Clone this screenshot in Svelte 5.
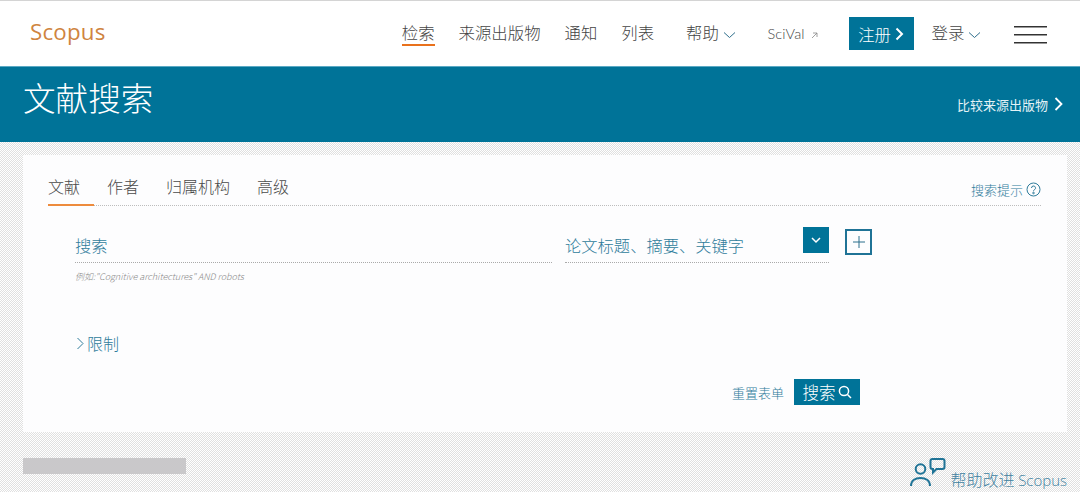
<script>
  const nav = ['来源出版物', '通知', '列表'];
  const tabs = ['文献', '作者', '归属机构', '高级'];
</script>

<header class="topbar">
  <div class="logo">Scopus</div>
  <nav class="nav">
    <a class="nav-link active" href="#a">检索</a>
    {#each nav as item}
      <a class="nav-link" href="#a">{item}</a>
    {/each}
    <a class="nav-link help" href="#a">帮助
      <svg width="13" height="8" viewBox="0 0 13 8"><path d="M1 1.500l5.500 5 5.500-5" /></svg>
    </a>
    <a class="scival" href="#a">SciVal
      <svg width="7" height="7" viewBox="0 0 7 7"><path d="M1 6l5-5M2 1h4v4" /></svg>
    </a>
    <a class="register" href="#a">注册
      <svg width="9" height="14" viewBox="0 0 9 14"><path d="M1.500 1.500l5.500 5.500-5.500 5.500" /></svg>
    </a>
    <a class="nav-link login" href="#a">登录
      <svg width="13" height="8" viewBox="0 0 13 8"><path d="M1 1.500l5.500 5 5.500-5" /></svg>
    </a>
    <div class="burger"><span></span><span></span><span></span></div>
  </nav>
</header>

<section class="band">
  <h1>文献搜索</h1>
  <a class="compare" href="#a">比较来源出版物
    <svg width="9" height="14" viewBox="0 0 9 14"><path d="M1.500 1l6 6-6 6" /></svg>
  </a>
</section>

<main class="page">
  <div class="card">
    <div class="tabs">
      {#each tabs as tab, i}
        <a class="tab" class:current={i === 0} href="#a">{tab}</a>
      {/each}
      <a class="tips" href="#a">搜索提示
        <svg width="15" height="15" viewBox="0 0 15 15">
          <circle cx="7.500" cy="7.500" r="6.500" />
          <path d="M5.500 6a2 2 0 1 1 3 1.700c-.7.400-1 .8-1 1.500" />
          <circle class="dot" cx="7.500" cy="11" r=".8" />
        </svg>
      </a>
    </div>

    <div class="form">
      <div class="query">
        <div class="field-text">搜索</div>
        <div class="example">例如:"Cognitive architectures" AND robots</div>
      </div>
      <div class="scope">
        <div class="field-text">论文标题、摘要、关键字</div>
        <span class="select-btn">
          <svg width="10" height="7" viewBox="0 0 10 7"><path d="M1 1l4 4 4-4" /></svg>
        </span>
      </div>
      <span class="add-btn">
        <svg width="12" height="12" viewBox="0 0 12 12"><path d="M6 0v12M0 6h12" /></svg>
      </span>
    </div>

    <a class="limit" href="#a">
      <svg width="9" height="13" viewBox="0 0 9 13"><path d="M1.500 1l5.500 5.500-5.500 5.500" /></svg>
      限制
    </a>

    <div class="actions">
      <a class="reset" href="#a">重置表单</a>
      <button class="search">搜索
        <svg width="14" height="14" viewBox="0 0 14 14"><circle cx="6" cy="6" r="4.600" /><path d="M9.500 9.500l3.500 3.500" /></svg>
      </button>
    </div>
  </div>

  <div class="bottom">
    <div class="redacted"></div>
    <a class="feedback" href="#a">
      <svg width="36" height="30" viewBox="0 0 36 30">
        <circle cx="10.500" cy="11" r="4.800" />
        <path d="M1 28c0-5 4-8 9.500-8s9.500 3 9.500 8" />
        <path d="M22.500 1h10a2 2 0 0 1 2 2v6a2 2 0 0 1-2 2h-6l-3.500 3.500V11h-.5a2 2 0 0 1-2-2V3a2 2 0 0 1 2-2z" />
      </svg>
      <span>帮助改进 <i>Scopus</i></span>
    </a>
  </div>
</main>

<style>
  :global(body) {
    margin: 0;
    font-family: "Noto Sans CJK SC", "Noto Sans", sans-serif;
    font-weight: 300;
    background: #fff;
    overflow: hidden;
  }
  a {
    text-decoration: none;
    color: inherit;
  }
  svg {
    fill: none;
    stroke: currentColor;
  }
  .topbar {
    box-sizing: border-box;
    height: 66px;
    border-top: 1px solid #d4d4d4;
    display: flex;
    align-items: center;
    justify-content: space-between;
    padding: 0 33px 0 30px;
    color: #444;
    background: #fff;
  }
  .logo {
    font-family: "Open Sans", sans-serif;
    font-size: 22.300px;
    font-weight: 400;
    color: #cf8440;
    letter-spacing: .2px;
    margin-top: -4px;
  }
  .nav {
    display: flex;
    align-items: center;
    font-size: 16.400px;
  }
  .nav-link {
    margin-right: 24px;
    line-height: 22px;
    padding-bottom: 1px;
    border-bottom: 2px solid transparent;
  }
  .nav-link.active {
    border-bottom-color: #e9711c;
  }
  .help {
    margin-left: 8px;
    margin-right: 0;
  }
  .help svg, .login svg {
    stroke: #2f6f8c;
  }
  .scival {
    font-family: "Lato", sans-serif;
    font-size: 14.500px;
    margin-left: 32px;
    letter-spacing: .1px;
  }
  .scival svg {
    stroke: #888;
    stroke-width: .8;
    margin-left: 2px;
  }
  .register {
    box-sizing: border-box;
    width: 65px;
    height: 33px;
    margin-left: 31px;
    margin-right: 18px;
    background: #007398;
    color: #fff;
    display: flex;
    align-items: center;
    justify-content: center;
    gap: 4px;
  }
  .register svg {
    stroke-width: 2;
  }
  .login {
    margin-right: 33px;
  }
  .burger {
    width: 33px;
    display: flex;
    flex-direction: column;
    gap: 6px;
    margin-top: 2px;
  }
  .burger span {
    height: 1px;
    background: #333;
    border-bottom: 1px solid #999;
  }
  .band {
    box-sizing: border-box;
    height: 76px;
    background: #007398;
    border-top: 1px solid #5ba9c4;
    color: #fff;
    display: flex;
    justify-content: space-between;
    padding: 0 17px 0 23px;
  }
  .band h1 {
    margin: 7px 0 0;
    font-size: 32.600px;
    line-height: 46px;
    font-weight: 300;
  }
  .compare {
    display: flex;
    align-items: center;
    gap: 6px;
    height: 24px;
    margin-top: 25px;
    font-size: 13px;
    font-weight: 400;
    color: #e4f2f6;
  }
  .compare svg {
    stroke: #fff;
    stroke-width: 1.800;
  }
  .page {
    height: 350px;
    box-sizing: border-box;
    padding: 13px 13px 0 23px;
    background-color: #fff;
    background-image: repeating-conic-gradient(#e0e0e0 0 25%, #fff 0 50%);
    background-size: 2px 2px;
  }
  .card {
    box-sizing: border-box;
    height: 277px;
    background: #fdfdfe;
    padding: 18px 26px 0 25px;
    display: flex;
    flex-direction: column;
  }
  .tabs {
    display: flex;
    align-items: flex-start;
    height: 32px;
    border-bottom: 1px dotted #bdbdbd;
    color: #4a4a4a;
    font-size: 16px;
  }
  .tab {
    line-height: 27px;
    height: 32px;
    margin-right: 27px;
  }
  .tab.current {
    box-sizing: border-box;
    width: 46px;
    margin-right: 13px;
    height: 33px;
    border-bottom: 2px solid #ed8b3d;
  }
  .tips {
    margin-left: auto;
    margin-top: 7px;
    display: flex;
    align-items: center;
    gap: 3px;
    font-size: 13px;
    color: #2f7c9b;
  }
  .form {
    display: flex;
    align-items: flex-start;
    margin-top: 24px;
    padding-left: 27px;
  }
  .field-text {
    height: 33px;
    box-sizing: border-box;
    line-height: 30px;
    font-size: 16.300px;
    color: #2f7c9b;
    border-bottom: 1px dotted #aaa;
  }
  .query {
    width: 477px;
    margin-right: 13px;
  }
  .example {
    font-size: 9px;
    font-style: italic;
    color: #888;
    margin-top: 7px;
    line-height: 14px;
  }
  .scope {
    width: 264px;
    position: relative;
    margin-right: 16px;
  }
  .select-btn {
    position: absolute;
    top: -3px;
    right: 0;
    width: 26px;
    height: 26px;
    background: #007398;
    color: #fff;
    display: flex;
    align-items: center;
    justify-content: center;
  }
  .select-btn svg {
    stroke-width: 1.500;
  }
  .add-btn {
    box-sizing: border-box;
    width: 27px;
    height: 26px;
    margin-top: -1px;
    border: 2px solid #1f7396;
    color: #2a6f8c;
    display: flex;
    align-items: center;
    justify-content: center;
  }
  .limit {
    display: flex;
    align-items: center;
    gap: 2px;
    margin: 47px 0 0 28px;
    font-size: 16px;
    line-height: 24px;
    color: #2f7c9b;
  }
  .actions {
    display: flex;
    justify-content: flex-end;
    align-items: center;
    gap: 10px;
    margin-top: 24px;
    padding-right: 181px;
  }
  .reset {
    font-size: 13px;
    color: #2f7c9b;
  }
  .search {
    box-sizing: border-box;
    width: 66px;
    height: 26px;
    border: 0;
    padding: 0;
    background: #007398;
    color: #fff;
    font: inherit;
    font-size: 16.500px;
    display: flex;
    align-items: center;
    justify-content: center;
    gap: 2px;
  }
  .search svg {
    stroke-width: 1.500;
  }
  .bottom {
    display: flex;
    justify-content: space-between;
  }
  .redacted {
    width: 163px;
    height: 16px;
    margin-top: 26px;
    background: #c9c8ca;
  }
  .feedback {
    display: flex;
    align-items: flex-start;
    gap: 5px;
    margin-top: 26px;
    font-size: 16px;
    color: #3f82a0;
  }
  .feedback svg {
    stroke: #1f7396;
    stroke-width: 2;
  }
  .feedback span {
    line-height: 24px;
    margin-top: 9px;
    white-space: nowrap;
  }
  .feedback i {
    font-family: "Open Sans", sans-serif;
    font-style: normal;
    font-size: 15px;
  }
</style>
